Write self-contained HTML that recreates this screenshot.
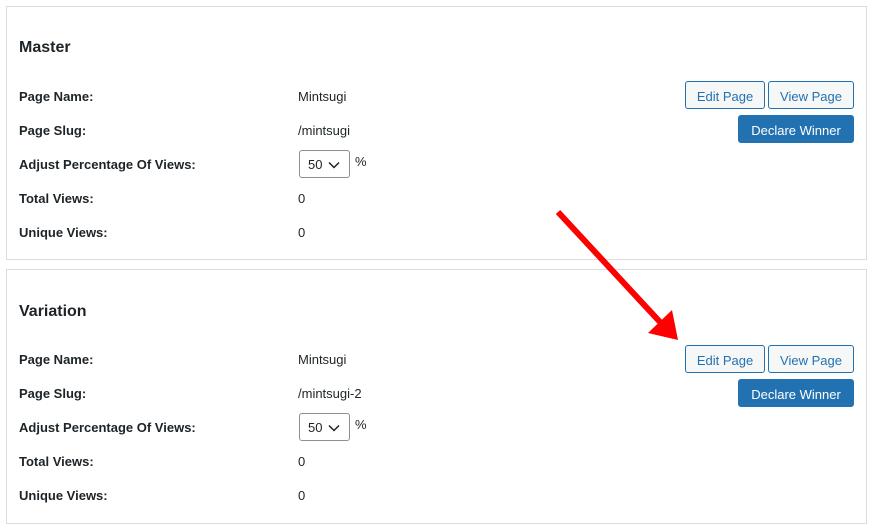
<!DOCTYPE html><html><head><style>
body{margin:0;width:871px;height:528px;background:#fff;font-family:"Liberation Sans",sans-serif;color:#1d2327;position:relative;overflow:hidden}
.p{position:absolute;left:6px;width:859px;height:252px;border:1px solid #dcdcde;background:#fff}
.t{position:absolute;left:12px;font-size:16px;font-weight:bold}
.l{position:absolute;left:12px;font-size:13px;font-weight:bold}
.v{position:absolute;left:291px;font-size:13px}
.b{position:absolute;box-sizing:border-box;height:28px;border:1px solid #2271b1;border-radius:3px;background:#f6f7f7;color:#2271b1;font-size:13px;text-align:center;line-height:29px}
.d{background:#2271b1;color:#fff}
.s{position:absolute;left:292px;width:51px;height:28px;box-sizing:border-box;border:1px solid #8c8f94;border-radius:3px;font-size:13px;line-height:27px;padding-left:8px}
</style></head><body>
<div class="p" style="top:6px">
<div class="t" style="top:32px">Master</div>
<div class="l" style="top:82px">Page Name:</div><div class="v" style="top:82px">Mintsugi</div>
<div class="l" style="top:116px">Page Slug:</div><div class="v" style="top:116px">/mintsugi</div>
<div class="l" style="top:150px">Adjust Percentage Of Views:</div>
<div class="s" style="top:143px">50 <svg width="12" height="8" style="margin-left:2px" viewBox="0 0 12 8"><path d="M1 1.5l5 5 5-5" fill="none" stroke="#1d2327" stroke-width="1.5"/></svg></div><div class="v" style="top:147px;left:348px">%</div>
<div class="l" style="top:184px">Total Views:</div><div class="v" style="top:184px">0</div>
<div class="l" style="top:218px">Unique Views:</div><div class="v" style="top:218px">0</div>
<div class="b" style="left:678px;top:74px;width:80px">Edit Page</div>
<div class="b" style="left:761px;top:74px;width:86px">View Page</div>
<div class="b d" style="left:731px;top:108px;width:116px">Declare Winner</div>
</div>
<div class="p" style="top:269px;height:253px">
<div class="t" style="top:33px">Variation</div>
<div class="l" style="top:82px">Page Name:</div><div class="v" style="top:82px">Mintsugi</div>
<div class="l" style="top:116px">Page Slug:</div><div class="v" style="top:116px">/mintsugi-2</div>
<div class="l" style="top:150px">Adjust Percentage Of Views:</div>
<div class="s" style="top:143px">50 <svg width="12" height="8" style="margin-left:2px" viewBox="0 0 12 8"><path d="M1 1.5l5 5 5-5" fill="none" stroke="#1d2327" stroke-width="1.5"/></svg></div><div class="v" style="top:147px;left:348px">%</div>
<div class="l" style="top:184px">Total Views:</div><div class="v" style="top:184px">0</div>
<div class="l" style="top:218px">Unique Views:</div><div class="v" style="top:218px">0</div>
<div class="b" style="left:678px;top:75px;width:80px">Edit Page</div>
<div class="b" style="left:761px;top:75px;width:86px">View Page</div>
<div class="b d" style="left:731px;top:109px;width:116px">Declare Winner</div>
</div>
<svg style="position:absolute;left:0;top:0" width="871" height="528"><line x1="558" y1="212" x2="660" y2="322" stroke="#f00" stroke-width="6"/><polygon points="678,340 648,333 672,310" fill="#f00"/></svg>
</body></html>
